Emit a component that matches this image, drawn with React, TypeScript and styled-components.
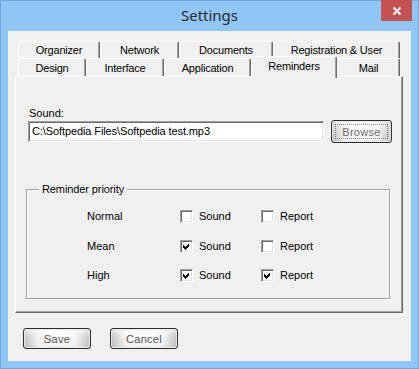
import React, { FC } from 'react';
import styled, { createGlobalStyle } from 'styled-components';

const GlobalStyle = createGlobalStyle`
  html, body {
    margin: 0;
    padding: 0;
    background: #ffffff;
  }
  * {
    box-sizing: border-box;
  }
`;

const topTabs = [
  { label: 'Organizer', width: 82 },
  { label: 'Network', width: 79 },
  { label: 'Documents', width: 94 },
  { label: 'Registration & User', width: 127 },
];

const bottomTabs = [
  { label: 'Design', width: 68 },
  { label: 'Interface', width: 78 },
  { label: 'Application', width: 87 },
  { label: 'Reminders', width: 86, active: true },
  { label: 'Mail', width: 63 },
];

const priorities = [
  { label: 'Normal', sound: false, report: false },
  { label: 'Mean', sound: true, report: false },
  { label: 'High', sound: true, report: true },
];

const CheckBox: FC<{ checked: boolean; label: string }> = ({ checked, label }) => (
  <CheckCell>
    <Box>
      {checked && (
        <svg width="9" height="9" viewBox="0 0 9 9" shapeRendering="crispEdges">
          <path d="M1 3h1v1h1v1h1v-1h1v-1h1v-1h1v3h-1v1h-1v1h-1v1h-1v-1h-1v-1h-1z" fill="#000" />
        </svg>
      )}
    </Box>
    {label}
  </CheckCell>
);

const App: FC = () => {
  return (
    <>
      <GlobalStyle />
      <Window>
        <TitleBar>
          <span />
          <Title>Settings</Title>
          <CloseButton>
            <svg width="10" height="10" viewBox="0 0 10 10">
              <path d="M1.5 1.5 L8.5 8.5 M8.5 1.5 L1.5 8.5" stroke="#fff" strokeWidth="2" />
            </svg>
          </CloseButton>
        </TitleBar>
        <Client>
          <TabRow $height={17}>
            {topTabs.map((t) => (
              <Tab key={t.label} $width={t.width}>
                {t.label}
              </Tab>
            ))}
          </TabRow>
          <TabRow $height={18}>
            {bottomTabs.map((t) => (
              <Tab key={t.label} $width={t.width} $active={t.active}>
                {t.label}
              </Tab>
            ))}
          </TabRow>
          <Panel>
            <FieldLabel>Sound:</FieldLabel>
            <FileRow>
              <TextBox>C:\Softpedia Files\Softpedia test.mp3</TextBox>
              <BrowseButton>
                <FocusRect>Browse</FocusRect>
              </BrowseButton>
            </FileRow>
            <Group>
              <Legend>Reminder priority</Legend>
              <PriorityGrid>
                {priorities.map((p) => (
                  <React.Fragment key={p.label}>
                    <RowLabel>{p.label}</RowLabel>
                    <CheckBox checked={p.sound} label="Sound" />
                    <CheckBox checked={p.report} label="Report" />
                  </React.Fragment>
                ))}
              </PriorityGrid>
            </Group>
          </Panel>
          <ButtonRow>
            <DialogButton>Save</DialogButton>
            <DialogButton>Cancel</DialogButton>
          </ButtonRow>
        </Client>
      </Window>
    </>
  );
};

export default App;

const Window = styled.div`
  width: 419px;
  height: 369px;
  background: #8ec6f6;
  border: 1px solid #6ea8e0;
  padding: 0 7px 7px;
  display: flex;
  flex-direction: column;
  font-family: 'Liberation Sans', Arial, sans-serif;
  font-size: 11px;
  color: #000;
`;

const TitleBar = styled.div`
  height: 30px;
  display: grid;
  grid-template-columns: 1fr auto 1fr;
  align-items: start;
`;

const Title = styled.div`
  font-family: 'Noto Sans', 'Open Sans', sans-serif;
  font-size: 15px;
  line-height: 30px;
  color: #2b2b2b;
  margin-top: -1px;
`;

const CloseButton = styled.div`
  justify-self: end;
  width: 31px;
  height: 21px;
  margin-top: -1px;
  margin-right: -1px;
  background: #c75050;
  display: flex;
  align-items: center;
  justify-content: center;
`;

const Client = styled.div`
  flex: 1;
  background: #f0f0f0;
  padding: 10px 8px 0 7px;
  display: flex;
  flex-direction: column;
`;

const TabRow = styled.div<{ $height: number }>`
  display: flex;
  height: ${(p) => p.$height}px;
  margin: 0 3px;
`;

const Tab = styled.div<{ $width: number; $active?: boolean }>`
  width: ${(p) => p.$width}px;
  height: ${(p) => (p.$active ? 'calc(100% + 4px)' : '100%')};
  margin-top: ${(p) => (p.$active ? '-2px' : '0')};
  padding-bottom: ${(p) => (p.$active ? '3px' : '0')};
  position: relative;
  z-index: ${(p) => (p.$active ? 1 : 0)};
  background: #f0f0f0;
  border-top: 1px solid #ffffff;
  border-left: 1px solid #ffffff;
  border-right: 1px solid #696969;
  border-radius: 2px 2px 0 0;
  box-shadow: inset -1px 0 0 #a0a0a0;
  display: flex;
  align-items: center;
  justify-content: center;
  white-space: nowrap;
  letter-spacing: -0.2px;
`;

const Panel = styled.div`
  width: 388px;
  height: 237px;
  border-top: 1px solid #ffffff;
  border-left: 1px solid #ffffff;
  border-right: 1px solid #696969;
  border-bottom: 1px solid #696969;
  box-shadow: inset -1px -1px 0 #a0a0a0;
  padding: 30px 0 0 0;
  display: flex;
  flex-direction: column;
`;

const FieldLabel = styled.div`
  line-height: 13px;
  margin-left: 13px;
`;

const FileRow = styled.div`
  display: flex;
  align-items: center;
  gap: 7px;
  margin-left: 12px;
  height: 23px;
`;

const TextBox = styled.div`
  width: 296px;
  height: 21px;
  background: #ffffff;
  border-top: 1px solid #a0a0a0;
  border-left: 1px solid #a0a0a0;
  border-right: 1px solid #ffffff;
  border-bottom: 1px solid #ffffff;
  box-shadow: inset 1px 1px 0 #696969, inset -1px -1px 0 #e3e3e3;
  padding: 0 0 0 3px;
  line-height: 19px;
  white-space: nowrap;
  letter-spacing: -0.1px;
`;

const ButtonFace = styled.div`
  border: 1px solid #2f2f2f;
  border-radius: 3px;
  background:
    linear-gradient(to bottom, rgba(255, 255, 255, 0.6), rgba(255, 255, 255, 0) 45%, rgba(0, 0, 0, 0.04)),
    linear-gradient(to right, #c4c4c4, #f6f6f6 22%, #fbfbfb 50%, #f6f6f6 78%, #c4c4c4);
  box-shadow: inset 0 0 0 1px #e8e8e8;
  display: flex;
  align-items: center;
  justify-content: center;
  letter-spacing: 0.3px;
`;

const BrowseButton = styled(ButtonFace)`
  width: 61px;
  height: 23px;
  padding: 3px;
  color: #6d6d6d;
`;

const FocusRect = styled.div`
  width: 100%;
  height: 100%;
  border: 1px dotted #8a8a8a;
  display: flex;
  align-items: center;
  justify-content: center;
`;

const Group = styled.fieldset`
  margin: 40px 0 0 10px;
  width: 364px;
  height: 116px;
  padding: 14px 0 0 12px;
  border: 1px solid #a0a0a0;
  box-shadow: inset 1px 1px 0 #ffffff, 1px 1px 0 #ffffff;
  min-width: 0;
`;

const Legend = styled.legend`
  padding: 0 3px;
  line-height: 13px;
  letter-spacing: -0.1px;
`;

const PriorityGrid = styled.div`
  display: grid;
  grid-template-columns: 93px 81px auto;
  grid-auto-rows: 13px;
  row-gap: 16.5px;
  margin-left: 48px;
  align-items: center;
`;

const RowLabel = styled.div`
  line-height: 13px;
`;

const CheckCell = styled.div`
  display: flex;
  align-items: center;
  gap: 6px;
  line-height: 13px;
`;

const Box = styled.div`
  width: 13px;
  height: 13px;
  background: #ffffff;
  border-top: 1px solid #a0a0a0;
  border-left: 1px solid #a0a0a0;
  border-right: 1px solid #ffffff;
  border-bottom: 1px solid #ffffff;
  box-shadow: inset 1px 1px 0 #696969, inset -1px -1px 0 #e3e3e3;
  display: flex;
  align-items: center;
  justify-content: center;
`;

const ButtonRow = styled.div`
  display: flex;
  gap: 19px;
  margin: 15px 0 0 8px;
`;

const DialogButton = styled(ButtonFace)`
  width: 68px;
  height: 21px;
  color: #555555;
`;
